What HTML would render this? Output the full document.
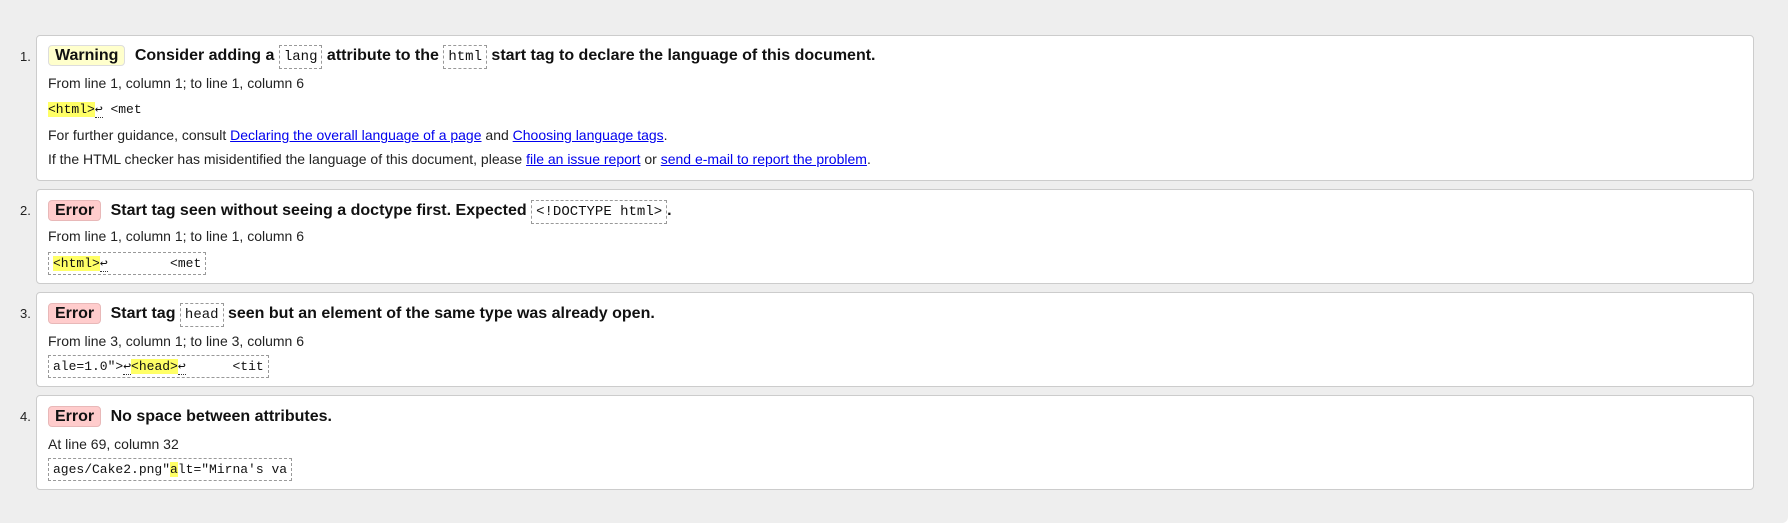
<!DOCTYPE html>
<html><head><style>
*{margin:0;padding:0;box-sizing:border-box}
body{width:1790px;height:527px;background:#fff;font-family:"Liberation Sans",Arial,sans-serif;color:#111;overflow:hidden;position:relative}
.bg{position:absolute;left:0;top:0;width:1788px;height:523px;background:#eeeeee;border-radius:0 0 6px 0}
.card{position:absolute;left:36px;width:1718px;background:#fff;border:1px solid #ccc;border-radius:4px}
.num{position:absolute;left:20px;font-size:13px;color:#222}
.row{position:absolute;left:48px;white-space:nowrap}
.h{font-size:16px;font-weight:bold;height:22px;line-height:22px}
.badge{display:inline-block;height:21px;line-height:19px;padding:0 6px;border:1px solid #ccc;border-radius:4px;font-weight:bold;margin-right:5px;font-size:16px}
.warn{background:#ffffcc;border-color:#ddd}
.err{background:#ffcccc;border-color:#e8b8b8}
.mc{font-family:"Liberation Mono",monospace;font-weight:normal;font-size:14px;border:1px dashed #999;padding:3px 4px;}
.t{font-size:14px;line-height:18px;color:#222}
a{color:#00e;text-decoration:underline}
.code{font-family:"Liberation Mono",monospace;font-size:13px;line-height:20px;}
.box{border:1px dashed #999;padding:0 4px;height:23px;line-height:21px;display:inline-block}
.hl{background:#ffff66}
.ret{border-bottom:1px dotted #333}
</style></head><body>
<div class="bg"></div>
<div class="card" style="top:35px;height:146px"></div>
<div class="card" style="top:189px;height:95px"></div>
<div class="card" style="top:292px;height:95px"></div>
<div class="card" style="top:395px;height:95px"></div>

<div class="num" style="top:49px">1.</div>
<div class="row h" style="top:45px"><span class="badge warn">Warning</span> Consider adding a <span class="mc">lang</span> attribute to the <span class="mc">html</span> start tag to declare the language of this document.</div>
<div class="row t" style="top:74px">From line 1, column 1; to line 1, column 6</div>
<div class="row code" style="top:100px"><span class="hl">&lt;html&gt;</span><span class="ret">↩</span> &lt;met</div>
<div class="row t" style="top:126px">For further guidance, consult <a>Declaring the overall language of a page</a> and <a>Choosing language tags</a>.</div>
<div class="row t" style="top:150px">If the HTML checker has misidentified the language of this document, please <a>file an issue report</a> or <a>send e-mail to report the problem</a>.</div>

<div class="num" style="top:203px">2.</div>
<div class="row h" style="top:200px"><span class="badge err">Error</span> Start tag seen without seeing a doctype first. Expected <span class="mc">&lt;!DOCTYPE html&gt;</span>.</div>
<div class="row t" style="top:227px">From line 1, column 1; to line 1, column 6</div>
<div class="row code box" style="top:252px"><span class="hl">&lt;html&gt;</span><span class="ret">↩</span>&nbsp;&nbsp;&nbsp;&nbsp;&nbsp;&nbsp;&nbsp;&nbsp;&lt;met</div>

<div class="num" style="top:306px">3.</div>
<div class="row h" style="top:303px"><span class="badge err">Error</span> Start tag <span class="mc">head</span> seen but an element of the same type was already open.</div>
<div class="row t" style="top:332px">From line 3, column 1; to line 3, column 6</div>
<div class="row code box" style="top:355px">ale=1.0"&gt;<span class="ret">↩</span><span class="hl">&lt;head&gt;</span><span class="ret">↩</span>&nbsp;&nbsp;&nbsp;&nbsp;&nbsp;&nbsp;&lt;tit</div>

<div class="num" style="top:409px">4.</div>
<div class="row h" style="top:406px"><span class="badge err">Error</span> No space between attributes.</div>
<div class="row t" style="top:435px">At line 69, column 32</div>
<div class="row code box" style="top:458px">ages/Cake2.png"<span class="hl">a</span>lt="Mirna's va</div>
</body></html>
